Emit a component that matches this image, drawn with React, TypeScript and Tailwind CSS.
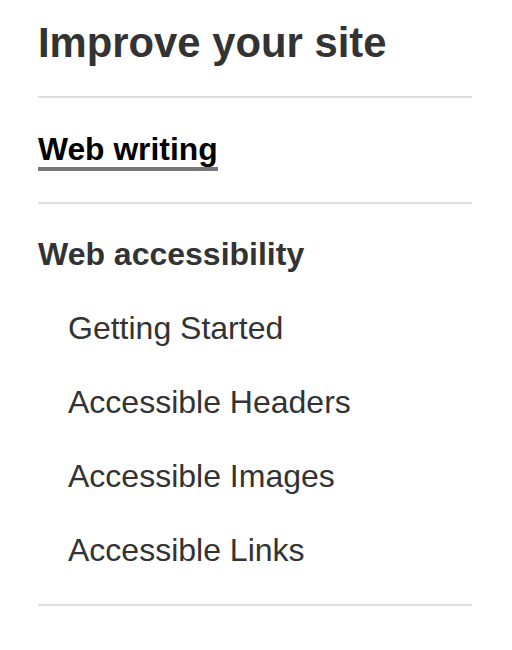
const items = ["Getting Started", "Accessible Headers", "Accessible Images", "Accessible Links"];

export default function App() {
  return (
    <div className="min-h-screen bg-white pl-[38px] pt-[18px] font-['Liberation_Sans',Arial,sans-serif] text-[#333]">
      <div className="w-[434px]">
        <h1 className="text-[41.8px] font-bold leading-[50px]">Improve your site</h1>

        <div className="mt-[28px] h-[2px] bg-[#dddddd]" />

        <div className="pt-[31px] pb-[33px] text-[31.8px] font-bold leading-[40px]">
          <a href="#" className="border-b-4 border-[#777777] text-black">
            Web writing
          </a>
        </div>

        <div className="h-[2px] bg-[#dddddd]" />

        <div className="pt-[30px] pb-[17px]">
          <h2 className="text-[32px] font-bold leading-[40px]">Web accessibility</h2>
          <ul className="mt-[17px]">
            {items.map((item) => (
              <li key={item} className="pl-[30px] text-[32px] leading-[74px]">
                <a href="#">{item}</a>
              </li>
            ))}
          </ul>
        </div>

        <div className="h-[2px] bg-[#dddddd]" />
      </div>
    </div>
  );
}
